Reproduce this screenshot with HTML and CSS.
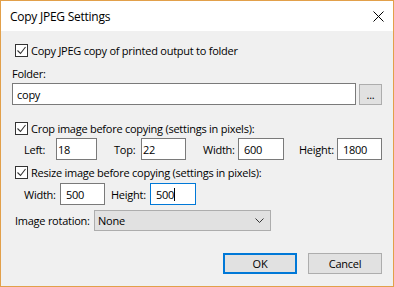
FILE: index.html
```html
<!DOCTYPE html>
<html>
<head>
<meta charset="utf-8">
<link rel="stylesheet" href="styles.css">
</head>
<body>
<div class="window">
  <div class="titlebar">
    <span class="title">Copy JPEG Settings</span>
    <svg class="close" width="11" height="11" viewBox="0 0 11 11"><path d="M0.5 0.5 L10.5 10.5 M10.5 0.5 L0.5 10.5" stroke="#000" stroke-width="1" fill="none"/></svg>
  </div>
  <div class="content">
    <div class="check row-copy">
      <span class="box"><svg width="11" height="11" viewBox="0 0 11 11"><path d="M1.5 5.5 L4.5 8.5 L9.5 2" stroke="#333" stroke-width="1.1" fill="none"/></svg></span>
      <span class="check-label">Copy JPEG copy of printed output to folder</span>
    </div>
    <div class="folder-label">Folder:</div>
    <div class="folder-row">
      <div class="tb folder-input">copy</div>
      <div class="btn browse">...</div>
    </div>
    <div class="check row-crop">
      <span class="box"><svg width="11" height="11" viewBox="0 0 11 11"><path d="M1.5 5.5 L4.5 8.5 L9.5 2" stroke="#333" stroke-width="1.1" fill="none"/></svg></span>
      <span class="check-label">Crop image before copying (settings in pixels):</span>
    </div>
    <div class="field-row crop-row">
      <span class="lbl l-left">Left:</span>
      <div class="tb tight w-left">18</div>
      <span class="lbl l-top">Top:</span>
      <div class="tb tight w-top">22</div>
      <span class="lbl l-width">Width:</span>
      <div class="tb w-width">600</div>
      <span class="lbl l-height">Height:</span>
      <div class="tb w-height">1800</div>
    </div>
    <div class="check row-resize">
      <span class="box"><svg width="11" height="11" viewBox="0 0 11 11"><path d="M1.5 5.5 L4.5 8.5 L9.5 2" stroke="#333" stroke-width="1.1" fill="none"/></svg></span>
      <span class="check-label">Resize image before copying (settings in pixels):</span>
    </div>
    <div class="field-row resize-row">
      <span class="lbl r-width">Width:</span>
      <div class="tb w-rw">500</div>
      <span class="lbl r-height">Height:</span>
      <div class="tb focused w-rh">500<span class="caret"></span></div>
    </div>
    <div class="rotation-row">
      <span class="lbl rot-label">Image rotation:</span>
      <div class="combo">
        <span>None</span>
        <svg class="chev" width="9" height="5" viewBox="0 0 9 5"><path d="M0.5 0.5 L4.5 4.5 L8.5 0.5" stroke="#333" stroke-width="1" fill="none"/></svg>
      </div>
    </div>
    <div class="buttons">
      <div class="btn push default">OK</div>
      <div class="btn push">Cancel</div>
    </div>
  </div>
</div>
</body>
</html>
```

FILE: styles.css
```css
* { box-sizing: border-box; }
html, body { margin: 0; padding: 0; }
body {
  width: 394px;
  height: 287px;
  overflow: hidden;
  font-family: "Open Sans", "Noto Sans", sans-serif;
  font-size: 11px;
  letter-spacing: -0.25px;
  color: #000;
  background: #f0f0f0;
}
.window {
  width: 394px;
  height: 287px;
  border: 1px solid #e2a04a;
  display: flex;
  flex-direction: column;
  background: #f0f0f0;
}
.titlebar {
  flex: none;
  height: 30px;
  background: #fff;
  display: flex;
  align-items: center;
  justify-content: space-between;
  padding: 0 9px 0 9px;
}
.title { font-size: 12px; letter-spacing: -0.25px; }
.close { display: block; }
.content {
  flex: 1;
  display: flex;
  flex-direction: column;
  align-items: flex-start;
  padding-left: 11px;
}
.check {
  display: flex;
  align-items: center;
  height: 13px;
  margin-left: 3px;
  white-space: nowrap;
}
.box {
  width: 13px;
  height: 13px;
  border: 1px solid #333;
  background: #fff;
  margin-right: 3px;
  flex: none;
}
.box svg { display: block; }
.row-copy { margin-top: 13px; }
.folder-label { margin-top: 9px; line-height: 16px; height: 16px; }
.folder-row { margin-top: 1px; display: flex; align-items: flex-start; }
.tb {
  height: 22px;
  border: 1px solid #7a7a7a;
  background: #fff;
  display: flex;
  align-items: center;
  padding-left: 5px;
  white-space: nowrap;
  flex: none;
}
.tb.tight { padding-left: 1px; }
.tb.focused { border-color: #0078d7; }
.caret { display: inline-block; width: 1px; height: 13px; background: #000; margin-left: 0px; }
.folder-input { width: 344px; padding-left: 4px; }
.btn {
  background: #e1e1e1;
  border: 1px solid #adadad;
  display: flex;
  align-items: center;
  justify-content: center;
  flex: none;
}
.browse { width: 23px; height: 21px; margin-left: 3px; margin-top: 1px; }
.row-crop { margin-top: 17px; }
.field-row { display: flex; align-items: center; height: 22px; }
.lbl { white-space: nowrap; flex: none; }
.crop-row { margin-top: 3px; }
.l-left { margin-left: 12px; width: 32px; }
.w-left { width: 41px; }
.l-top { margin-left: 17px; width: 27px; }
.w-top { width: 45px; }
.l-width { margin-left: 17px; width: 35px; }
.w-width { width: 46px; }
.l-height { margin-left: 15px; width: 38px; }
.w-height { width: 45px; }
.row-resize { margin-top: 6px; }
.resize-row { margin-top: 4px; }
.r-width { margin-left: 12px; width: 36px; }
.w-rw { width: 45px; }
.r-height { margin-left: 6px; width: 39px; }
.w-rh { width: 46px; }
.rotation-row { margin-top: 5px; display: flex; align-items: center; height: 21px; }
.rot-label { margin-left: 3px; width: 79px; }
.combo {
  width: 177px;
  height: 21px;
  background: #e1e1e1;
  border: 1px solid #adadad;
  display: flex;
  align-items: center;
  justify-content: space-between;
  padding: 0 6px 0 3px;
}
.chev { display: block; }
.buttons {
  margin-top: 22px;
  align-self: stretch;
  display: flex;
  justify-content: flex-end;
  gap: 11px;
  padding-right: 11px;
}
.push { width: 74px; height: 21px; }
.push.default { border: 2px solid #0078d7; }
```
